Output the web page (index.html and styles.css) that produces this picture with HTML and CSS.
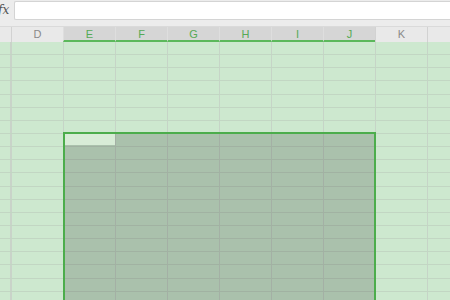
FILE: index.html
```html
<!DOCTYPE html>
<html>
	<head>
		<meta charset="UTF-8">
		<title>sheet</title>
		<link rel="stylesheet" href="styles.css">
	</head>
	<body>
		<div class="formula">
			<span class="fx">fx</span>
			<div class="input"></div>
		</div>
		<div class="colhead">
			<div class="hcell"></div>
			<div class="hcell">D</div>
			<div class="hcell on">E</div>
			<div class="hcell on">F</div>
			<div class="hcell on">G</div>
			<div class="hcell on">H</div>
			<div class="hcell on">I</div>
			<div class="hcell on">J</div>
			<div class="hcell">K</div>
			<div class="hcell"></div>
		</div>
		<div class="cells">
			<div class="range">
				<div class="active"></div>
			</div>
		</div>
	</body>
</html>
```

FILE: styles.css
```css
html, body {
	margin : 0; padding : 0;
	height : 100%;
	overflow : hidden;
}
body {
	background : #ececec;
	font-family : "Liberation Sans", Arial, sans-serif;
}
.formula {
	display : flex;
	height : 26px;
}
.fx {
	width : 16px;
	margin-left : -2px;
	padding-top : 3px;
	font-family : "DejaVu Serif", serif;
	font-style : italic;
	font-size : 12px;
	color : #555;
}
.input {
	flex : 1;
	height : 17px;
	margin-top : 1px;
	background : #fff;
	border : 1px solid #d4d4d4;
	border-right : none;
	border-radius : 2px 0 0 2px;
}
.colhead {
	display : grid;
	grid-template-columns : 11px repeat(8, 52px) 1fr;
	height : 15px;
	background : #e9e9e9;
	border-top : 1px solid #dadada;
}
.hcell {
	border-left : 1px solid #d2d2d2;
	font-size : 11px;
	line-height : 15px;
	text-align : center;
	color : #8a8a8a;
}
.hcell:first-child {
	border-left : none;
}
.hcell.on {
	background : #d6d6d6;
	color : #55aa55;
	border-left-color : #dedede;
	border-bottom : 2px solid #5cb85c;
	line-height : 14px;
	height : 13px;
}
.cells {
	display : grid;
	grid-template-columns : 11px repeat(8, 52px) 1fr;
	grid-template-rows : repeat(20, 13.14px);
	height : calc(100% - 42px);
	overflow : hidden;
	background-color : #cde8cf;
	background-image :
		repeating-linear-gradient(to bottom, transparent 0 12.14px, #c2d6c3 12.14px 13.14px),
		linear-gradient(to right, transparent 0 10px, #c9d3c9 10px 12px, transparent 12px),
		repeating-linear-gradient(to right, transparent 0 51px, #c6d4c7 51px 52px);
	background-position : 0 0, 0 0, 12px 0;
}
.range {
	grid-column : 3 / 9;
	grid-row : 8 / span 13;
	margin-top : -2px;
	margin-right : -1px;
	border : 2px solid #4cad4c;
	border-bottom : none;
	background : rgba(0, 0, 0, 0.17);
}
.active {
	width : 50px;
	height : 11px;
	background : #d8ecd7;
}
```
